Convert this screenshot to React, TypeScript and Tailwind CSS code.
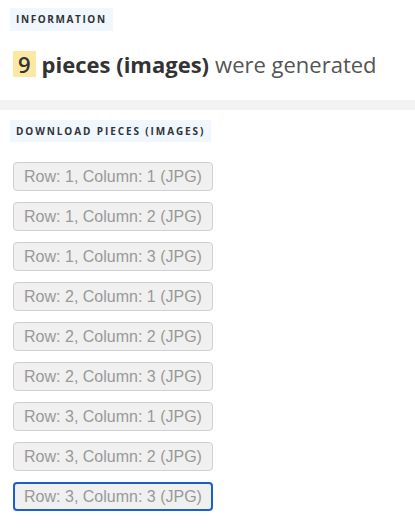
import React from "react";

const rows = [
  [1, 1], [1, 2], [1, 3],
  [2, 1], [2, 2], [2, 3],
  [3, 1], [3, 2], [3, 3],
];

export default function App() {
  return (
    <div className="w-[415px] h-[530px] bg-white overflow-hidden flex flex-col" style={{ fontFamily: '"Open Sans", sans-serif' }}>
      <div className="mt-[8px] ml-[10px] w-fit bg-[#f0f7fe] h-[23px] leading-[23px] px-[6px] text-[10px] font-bold tracking-[1.6px] text-[#333]">
        INFORMATION
      </div>
      <div className="ml-[13px] mt-[20px] h-[26px] flex items-center text-[22px] leading-[26px]">
        <span className="bg-[#fbe9a3] px-[5px] font-semibold text-[#333]">9</span>
        <span className="ml-[6px] font-bold text-[#333]">pieces (images)</span>
        <span className="ml-[6px] text-[#555]">were generated</span>
      </div>
      <div className="mt-[23px] h-[10px] bg-[#f3f3f3]" />
      <div className="mt-[10px] ml-[10px] w-fit bg-[#f0f7fe] h-[22px] leading-[22px] px-[6px] text-[10px] font-bold tracking-[1.9px] text-[#333]">
        DOWNLOAD PIECES (IMAGES)
      </div>
      <div className="ml-[13px] mt-[20px] flex flex-col items-start gap-[11px]" style={{ fontFamily: '"Liberation Sans", Arial, sans-serif' }}>
        {rows.map(([r, c], i) => {
          const last = i === rows.length - 1;
          return (
            <button
              key={i}
              className={
                last
                  ? "h-[29px] w-[200px] rounded-[4px] bg-[#f0f0f0] border-2 border-[#1a5fd0] text-[16px] text-[#999] text-center"
                  : "h-[29px] w-[200px] rounded-[4px] bg-[#f0f0f0] border border-[#d0d0d0] text-[16px] text-[#999] text-center"
              }
            >
              Row: {r}, Column: {c} (JPG)
            </button>
          );
        })}
      </div>
    </div>
  );
}
